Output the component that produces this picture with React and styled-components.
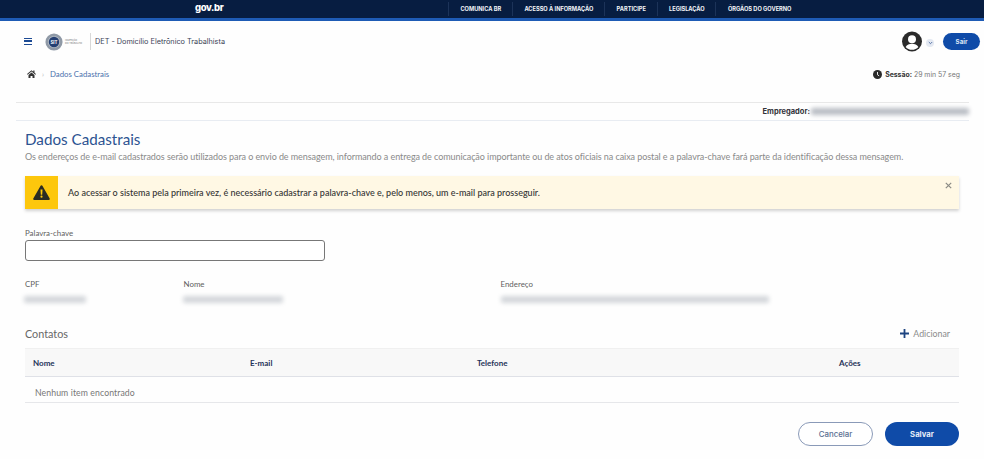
import React from "react";
import styled, { createGlobalStyle } from "styled-components";

const Global = createGlobalStyle`
  html, body { margin: 0; padding: 0; background: #fff; }
  body { font-family: "Lato", "Open Sans", sans-serif; color: #444; overflow: hidden; }
  * { box-sizing: border-box; }
`;
const Page = styled.div`width: 984px; height: 459px; overflow: hidden; background: #fefefe;`;
const TopBar = styled.div`
  height: 21px; background: #071d41; border-bottom: 3px solid #1e5bb5;
  display: flex; align-items: center; padding-left: 195px;
`;
const GovLogo = styled.div`
  width: 254px; color: #fff; font: 800 9.5px "Inter", sans-serif; letter-spacing: -0.4px; margin-top: -4px;
`;
const TopNav = styled.nav`display: flex; height: 18px; align-items: center; margin-left: -1px;`;
const TopLink = styled.a`
  color: #f2f4f8; font: 700 5.65px "Inter", sans-serif; line-height: 14px; height: 14px;
  padding: 0 10.8px 0 11.4px; border-left: 1px solid #1c3359; white-space: nowrap;
`;
const Header = styled.header`
  height: 41px; display: flex; align-items: center; padding: 0 4px 0 24px;
`;
const Burger = styled.div`
  width: 8px; height: 7px; margin-right: 13px;
  border-top: 1.5px solid #1c4a94; border-bottom: 1.5px solid #1c4a94; position: relative;
  &::after { content: ""; position: absolute; left: 0; right: 0; top: 1.3px; height: 1.5px; background: #1c4a94; }
`;
const LogoText = styled.div`
  font: 400 2.4px/3px "Inter", sans-serif; color: #777; width: 24px; margin-left: 2px;
`;
const LogoDivider = styled.div`width: 1px; height: 17px; background: #d8d8d8; margin: 0 4px 0 1px;`;
const AppTitle = styled.div`font: 400 7.3px "Inter", sans-serif; color: #3c4356; flex: 1;`;
const Chevron = styled.div`
  width: 8px; height: 8px; border-radius: 50%; background: #e4e9f2; margin: 2px 9px 0 4px;
  display: flex; align-items: center; justify-content: center;
`;
const SairBtn = styled.button`
  width: 37px; height: 17px; border: 0; border-radius: 9px; background: #0f4ba8; color: #dfe8f6;
  font: 700 6.2px "Inter", sans-serif; padding: 0;
`;
const CrumbRow = styled.div`
  height: 24px; display: flex; align-items: center; padding: 0 24px 0 27px; margin-bottom: 16px;
`;
const Crumbs = styled.div`flex: 1; display: flex; align-items: center;`;
const CrumbSep = styled.span`color: #b5b5b5; font-size: 7px; margin: 0 6px 0 6px;`;
const CrumbLink = styled.span`color: #4b72ad; font: 400 7.8px "Lato", sans-serif;`;
const Session = styled.div`display: flex; align-items: center; gap: 3px; font: 400 6.9px "Inter", sans-serif; color: #777;`;
const SessionLabel = styled.b`font-weight: 700; color: #333;`;
const EmployerBar = styled.div`
  margin-left: 16px; width: 953px; height: 19px; border-top: 1px solid #e8e8e8; border-bottom: 1px solid #e8ecf2;
  display: flex; align-items: center; justify-content: flex-end; gap: 1px;
`;
const EmployerLabel = styled.span`font: 700 7.5px "Inter", sans-serif; color: #33343a;`;
const Blur = styled.div`
  width: ${p => p.$w}px; height: ${p => p.$h || 7}px; background: ${p => p.$c || "#d4d7db"};
  filter: blur(2px); border-radius: 2px; margin-left: ${p => p.$ml || 0}px;
`;
const Main = styled.main`padding: 0 25px 0 25px;`;
const Title = styled.h1`
  margin: 8px 0 0; font: 400 15.2px/20px "Lato", sans-serif; color: #2c5391;
`;
const Desc = styled.p`
  margin: 1px 0 0; font: 400 9px/13px "Lato", sans-serif; color: #8a8a8a; letter-spacing: -0.07px; white-space: nowrap;
`;
const Alert = styled.div`
  margin-top: 13px; height: 33px; display: flex; align-items: center; background: #fff8e4;
  box-shadow: 0 2px 3px rgba(0,0,0,.18); position: relative;
`;
const AlertIcon = styled.div`
  width: 33px; height: 33px; background: #fdc70c; display: flex; align-items: center; justify-content: center;
`;
const AlertText = styled.div`
  margin-left: 10px; font: 500 9px "Lato", sans-serif; color: #333;
`;
const Close = styled.div`position: absolute; right: 7.5px; top: 5.5px; line-height: 0;`;
const FieldLabel = styled.div`font: 400 7.9px/11px "Lato", sans-serif; color: #5e5e5e;`;
const KeywordField = styled.div`margin-top: 19px;`;
const Input = styled.input`
  display: block; margin-top: 1px; width: 300px; height: 21px; border: 1px solid #777; border-radius: 3px; background: #fff;
`;
const InfoRow = styled.div`display: grid; grid-template-columns: 158.5px 317px 1fr; margin-top: 18px;`;
const InfoCol = styled.div`display: flex; flex-direction: column; gap: 6px;`;
const ContactsHead = styled.div`
  margin-top: 20px; height: 20px; display: flex; align-items: center; justify-content: space-between; padding-right: 9px;
`;
const ContactsTitle = styled.div`font: 400 10.8px "Lato", sans-serif; color: #666;`;
const AddLink = styled.div`display: flex; align-items: center; gap: 4px; font: 400 8.8px "Lato", sans-serif; color: #8b8b8b;`;
const TableHead = styled.div`
  margin-top: 5px; height: 29px; background: #f8f8f8; border-top: 1px solid #f0f0f0; border-bottom: 1px solid #dfe1e7;
  display: grid; grid-template-columns: 217px 227px 362px 1fr; align-items: center; padding-left: 8px;
  font: 700 8px "Lato", sans-serif; color: #1f3358;
`;
const EmptyRow = styled.div`
  height: 26px; display: flex; align-items: center; padding: 5px 0 0 10px; border-bottom: 1px solid #e6e7ea;
  font: 400 8.7px "Lato", sans-serif; color: #777; letter-spacing: .1px;
`;
const Actions = styled.div`display: flex; justify-content: flex-end; gap: 12px; margin-top: 19px;`;
const GhostBtn = styled.button`
  width: 75px; height: 24px; border-radius: 12px; border: 1px solid #8a9ab8; background: #fff; color: #5b6f92;
  font: 500 7.9px "Inter", sans-serif; padding: 0;
`;
const PrimaryBtn = styled.button`
  width: 74px; height: 24px; border-radius: 12px; border: 0; background: #0f4ba8; color: #e6edf8;
  font: 700 7.7px "Inter", sans-serif; padding: 0;
`;

const Seal = () => (
  <svg width="18" height="18" viewBox="0 0 20 20">
    <circle cx="10" cy="10" r="9.5" fill="#8f99a6" />
    <circle cx="10" cy="10" r="6.8" fill="#fff" opacity=".35" />
    <circle cx="10" cy="10" r="5.8" fill="#243f72" />
    <text x="10" y="11.8" textAnchor="middle" fontSize="5" fontWeight="700" fill="#fff" fontFamily="Inter">SIT</text>
  </svg>
);
const Avatar = () => (
  <svg width="20" height="21" viewBox="0 0 21 21">
    <circle cx="10.5" cy="10.5" r="10.5" fill="#2b2b2b" />
    <circle cx="10.5" cy="8.2" r="4.2" fill="#fff" />
    <path d="M3.8 16.2c1.4-2.6 3.8-3.4 6.7-3.4s5.300.8 6.700 3.400c-1.600 1.900-4 3-6.700 3s-5.100-1.100-6.700-3z" fill="#fff" />
  </svg>
);
const Home = () => (
  <svg width="9" height="8" viewBox="0 0 18 16"><path d="M9 0.500 0 8.200l1.200 1.300L9 2.900l7.800 6.600L18 8.200l-3-2.600V1h-2.500v2.500zM3 10v6h4v-4h4v4h4v-6L9 4.800z" fill="#333" /></svg>
);
const Clock = () => (
  <svg width="9" height="9" viewBox="0 0 10 10"><circle cx="5" cy="5" r="5" fill="#2a2a2a" /><path d="M5 2.200V5.300l1.800 1.200" stroke="#fff" strokeWidth="1" fill="none" /></svg>
);

export default function App() {
  return (
    <Page>
      <Global />
      <TopBar>
        <GovLogo>gov.br</GovLogo>
        <TopNav>
          <TopLink>COMUNICA BR</TopLink>
          <TopLink>ACESSO À INFORMAÇÃO</TopLink>
          <TopLink>PARTICIPE</TopLink>
          <TopLink>LEGISLAÇÃO</TopLink>
          <TopLink>ÓRGÃOS DO GOVERNO</TopLink>
        </TopNav>
      </TopBar>
      <Header>
        <Burger />
        <Seal />
        <LogoText>INSPEÇÃO<br />DO TRABALHO</LogoText>
        <LogoDivider />
        <AppTitle>DET - Domicílio Eletrônico Trabalhista</AppTitle>
        <Avatar />
        <Chevron>
          <svg width="5" height="4" viewBox="0 0 5 4"><path d="M.8 1l1.700 1.700L4.200 1" stroke="#3a5a96" strokeWidth=".8" fill="none" /></svg>
        </Chevron>
        <SairBtn>Sair</SairBtn>
      </Header>
      <CrumbRow>
        <Crumbs>
          <Home />
          <CrumbSep>›</CrumbSep>
          <CrumbLink>Dados Cadastrais</CrumbLink>
        </Crumbs>
        <Session>
          <Clock />
          <span><SessionLabel>Sessão:</SessionLabel> 29 min 57 seg</span>
        </Session>
      </CrumbRow>
      <EmployerBar>
        <EmployerLabel>Empregador:</EmployerLabel>
        <Blur $w={158} $h={7} $c="#b9bdc4" />
      </EmployerBar>
      <Main>
        <Title>Dados Cadastrais</Title>
        <Desc>Os endereços de e-mail cadastrados serão utilizados para o envio de mensagem, informando a entrega de comunicação importante ou de atos oficiais na caixa postal e a palavra-chave fará parte da identificação dessa mensagem.</Desc>
        <Alert>
          <AlertIcon>
            <svg width="17" height="15" viewBox="0 0 17 15">
              <path d="M8.500 0.300a1 1 0 0 1 .9.500l7.300 12.600a1 1 0 0 1-.9 1.500H1.200a1 1 0 0 1-.9-1.500L7.600.8a1 1 0 0 1 .9-.5z" fill="#2b2b22" />
              <path d="M7.500 4.500h2l-.3 5.200H7.800z" fill="#fdc70c" />
              <circle cx="8.500" cy="11.700" r="1.100" fill="#fdc70c" />
            </svg>
          </AlertIcon>
          <AlertText>Ao acessar o sistema pela primeira vez, é necessário cadastrar a palavra-chave e, pelo menos, um e-mail para prosseguir.</AlertText>
          <Close>
            <svg width="7" height="7" viewBox="0 0 7 7"><path d="M.8.8l5.400 5.400M6.200.8L.8 6.200" stroke="#8a8a84" strokeWidth="1.200" /></svg>
          </Close>
        </Alert>
        <KeywordField>
          <FieldLabel>Palavra-chave</FieldLabel>
          <Input aria-label="Palavra-chave" />
        </KeywordField>
        <InfoRow>
          <InfoCol><FieldLabel>CPF</FieldLabel><Blur $w={62} $ml={-1} /></InfoCol>
          <InfoCol><FieldLabel>Nome</FieldLabel><Blur $w={100} $ml={-1} /></InfoCol>
          <InfoCol><FieldLabel>Endereço</FieldLabel><Blur $w={268} /></InfoCol>
        </InfoRow>
        <ContactsHead>
          <ContactsTitle>Contatos</ContactsTitle>
          <AddLink>
            <svg width="9" height="9" viewBox="0 0 9 9"><path d="M4.500 0v9M0 4.500h9" stroke="#1d4480" strokeWidth="1.800" /></svg>
            Adicionar
          </AddLink>
        </ContactsHead>
        <TableHead>
          <span>Nome</span>
          <span>E-mail</span>
          <span>Telefone</span>
          <span>Ações</span>
        </TableHead>
        <EmptyRow>Nenhum item encontrado</EmptyRow>
        <Actions>
          <GhostBtn>Cancelar</GhostBtn>
          <PrimaryBtn>Salvar</PrimaryBtn>
        </Actions>
      </Main>
    </Page>
  );
}
